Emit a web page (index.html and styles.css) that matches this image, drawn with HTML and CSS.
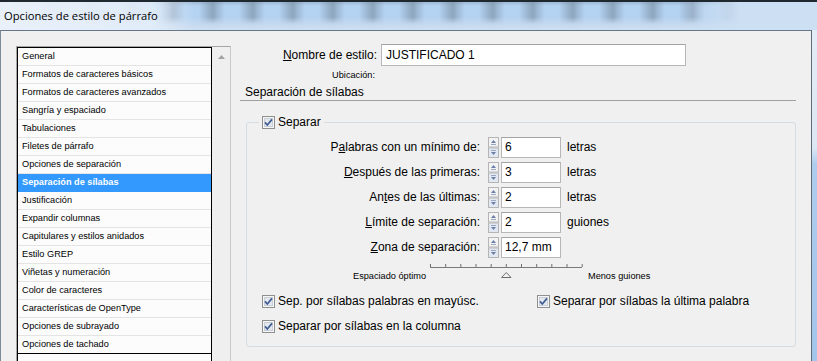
FILE: index.html
```html
<!DOCTYPE html>
<html lang="es">
<head>
<meta charset="utf-8">
<title>Opciones de estilo de párrafo</title>
<link rel="stylesheet" href="styles.css">
</head>
<body>
<div class="window">
  <header class="titlebar"><span class="title">Opciones de estilo de párrafo</span></header>
  <div class="frame">
    <div class="client">
      <nav class="sidebar">
        <ul class="list">
          <li>General</li>
          <li>Formatos de caracteres básicos</li>
          <li>Formatos de caracteres avanzados</li>
          <li>Sangría y espaciado</li>
          <li>Tabulaciones</li>
          <li>Filetes de párrafo</li>
          <li>Opciones de separación</li>
          <li class="sel">Separación de sílabas</li>
          <li>Justificación</li>
          <li>Expandir columnas</li>
          <li>Capitulares y estilos anidados</li>
          <li>Estilo GREP</li>
          <li>Viñetas y numeración</li>
          <li>Color de caracteres</li>
          <li>Características de OpenType</li>
          <li>Opciones de subrayado</li>
          <li class="last">Opciones de tachado</li>
        </ul>
        <div class="scroll"><svg width="7" height="4" viewBox="0 0 7 4"><path d="M0 4h7L3.5 0z" fill="#a3a3a3"/></svg></div>
      </nav>
      <main class="main">
        <div class="namegrid">
          <label class="lbl"><u>N</u>ombre de estilo:</label>
          <div class="field name">JUSTIFICADO 1</div>
          <span class="ubic">Ubicación:</span>
        </div>
        <div class="section">Separación de sílabas</div>
        <fieldset class="group">
          <legend class="legend">
            <svg class="cb" width="13" height="13" viewBox="0 0 13 13"><rect x="0.5" y="0.5" width="12" height="12" fill="#f6f6f6" stroke="#8e8f8f"/><rect x="2.5" y="2.5" width="8" height="8" fill="#e3e7ee" stroke="#c9ced6"/><path d="M3 6.4l2.3 2.6L10 3.4" fill="none" stroke="#3f5c93" stroke-width="1.7"/></svg>
            <span>Separar</span>
          </legend>
          <div class="spins">
            <span class="slbl">P<u>a</u>labras con un mínimo de:</span>
            <span class="spin"><svg width="11" height="21" viewBox="0 0 11 21"><rect x="0.5" y="0.5" width="10" height="9.5" fill="#f3f3f3" stroke="#b5b5b5"/><rect x="0.5" y="11" width="10" height="9.5" fill="#e2e8f2" stroke="#b5b5b5"/><path d="M3 6h5L5.5 3z" fill="#6a7fa8"/><path d="M3 7.5h5" stroke="#9aa8c2"/><path d="M3 15h5l-2.5 3z" fill="#6a7fa8"/><path d="M3 13.5h5" stroke="#9aa8c2"/></svg></span>
            <span class="field num">6</span>
            <span class="unit">letras</span>

            <span class="slbl"><u>D</u>espués de las primeras:</span>
            <span class="spin"><svg width="11" height="21" viewBox="0 0 11 21"><rect x="0.5" y="0.5" width="10" height="9.5" fill="#f3f3f3" stroke="#b5b5b5"/><rect x="0.5" y="11" width="10" height="9.5" fill="#e2e8f2" stroke="#b5b5b5"/><path d="M3 6h5L5.5 3z" fill="#6a7fa8"/><path d="M3 7.5h5" stroke="#9aa8c2"/><path d="M3 15h5l-2.5 3z" fill="#6a7fa8"/><path d="M3 13.5h5" stroke="#9aa8c2"/></svg></span>
            <span class="field num">3</span>
            <span class="unit">letras</span>

            <span class="slbl">An<u>t</u>es de las últimas:</span>
            <span class="spin"><svg width="11" height="21" viewBox="0 0 11 21"><rect x="0.5" y="0.5" width="10" height="9.5" fill="#f3f3f3" stroke="#b5b5b5"/><rect x="0.5" y="11" width="10" height="9.5" fill="#e2e8f2" stroke="#b5b5b5"/><path d="M3 6h5L5.5 3z" fill="#6a7fa8"/><path d="M3 7.5h5" stroke="#9aa8c2"/><path d="M3 15h5l-2.5 3z" fill="#6a7fa8"/><path d="M3 13.5h5" stroke="#9aa8c2"/></svg></span>
            <span class="field num">2</span>
            <span class="unit">letras</span>

            <span class="slbl"><u>L</u>ímite de separación:</span>
            <span class="spin"><svg width="11" height="21" viewBox="0 0 11 21"><rect x="0.5" y="0.5" width="10" height="9.5" fill="#f3f3f3" stroke="#b5b5b5"/><rect x="0.5" y="11" width="10" height="9.5" fill="#e2e8f2" stroke="#b5b5b5"/><path d="M3 6h5L5.5 3z" fill="#6a7fa8"/><path d="M3 7.5h5" stroke="#9aa8c2"/><path d="M3 15h5l-2.5 3z" fill="#6a7fa8"/><path d="M3 13.5h5" stroke="#9aa8c2"/></svg></span>
            <span class="field num">2</span>
            <span class="unit">guiones</span>

            <span class="slbl"><u>Z</u>ona de separación:</span>
            <span class="spin"><svg width="11" height="21" viewBox="0 0 11 21"><rect x="0.5" y="0.5" width="10" height="9.5" fill="#f3f3f3" stroke="#b5b5b5"/><rect x="0.5" y="11" width="10" height="9.5" fill="#e2e8f2" stroke="#b5b5b5"/><path d="M3 6h5L5.5 3z" fill="#6a7fa8"/><path d="M3 7.5h5" stroke="#9aa8c2"/><path d="M3 15h5l-2.5 3z" fill="#6a7fa8"/><path d="M3 13.5h5" stroke="#9aa8c2"/></svg></span>
            <span class="field num">12,7 mm</span>
          </div>
          <div class="slider">
            <span class="smallt first">Espaciado óptimo</span>
            <svg class="track" width="153" height="18" viewBox="0 0 153 18">
              <path d="M0 5.5h152" stroke="#7a7a7a"/>
              <path d="M0.5 2v3M15.7 2v3M30.8 2v3M46 2v3M61.2 2v3M76.3 2v3M91.5 2v3M106.7 2v3M121.8 2v3M137 2v3M152.2 2v3" stroke="#6e6e6e"/>
              <path d="M71.5 15.5h9.5L76.3 10.5z" fill="#f2f2f2" stroke="#6f6f6f"/>
            </svg>
            <span class="smallt last">Menos guiones</span>
          </div>
          <div class="checks">
            <label class="check"><svg class="cb" width="13" height="13" viewBox="0 0 13 13"><rect x="0.5" y="0.5" width="12" height="12" fill="#f6f6f6" stroke="#8e8f8f"/><rect x="2.5" y="2.5" width="8" height="8" fill="#e3e7ee" stroke="#c9ced6"/><path d="M3 6.4l2.3 2.6L10 3.4" fill="none" stroke="#3f5c93" stroke-width="1.7"/></svg><span>Sep. por sílabas palabras en mayúsc.</span></label>
            <label class="check"><svg class="cb" width="13" height="13" viewBox="0 0 13 13"><rect x="0.5" y="0.5" width="12" height="12" fill="#f6f6f6" stroke="#8e8f8f"/><rect x="2.5" y="2.5" width="8" height="8" fill="#e3e7ee" stroke="#c9ced6"/><path d="M3 6.4l2.3 2.6L10 3.4" fill="none" stroke="#3f5c93" stroke-width="1.7"/></svg><span>Separar por sílabas la última palabra</span></label>
            <label class="check"><svg class="cb" width="13" height="13" viewBox="0 0 13 13"><rect x="0.5" y="0.5" width="12" height="12" fill="#f6f6f6" stroke="#8e8f8f"/><rect x="2.5" y="2.5" width="8" height="8" fill="#e3e7ee" stroke="#c9ced6"/><path d="M3 6.4l2.3 2.6L10 3.4" fill="none" stroke="#3f5c93" stroke-width="1.7"/></svg><span>Separar por sílabas en la columna</span></label>
          </div>
        </fieldset>
      </main>
    </div>
    <div class="rborder"></div>
  </div>
</div>
</body>
</html>
```

FILE: styles.css
```css
* { box-sizing: border-box; }

html, body {
  margin: 0;
  padding: 0;
  background: #f0f0f0;
}

.window {
  width: 817px;
  height: 361px;
  overflow: hidden;
  font-family: "Liberation Sans", Arial, sans-serif;
  color: #000;
}

/* ---------- title bar (Aero glass) ---------- */
.titlebar {
  height: 30px;
  display: flex;
  align-items: center;
  padding-left: 4px;
  background-color: #bcd2e8;
  background-image:
    linear-gradient(180deg, #1f272f 0, #1f272f 2px, transparent 2px),
    linear-gradient(90deg, rgba(234,241,250,.97) 0, rgba(228,238,249,.9) 150px, rgba(220,233,247,0) 195px),
    linear-gradient(90deg, rgba(205,223,243,0) 680px, rgba(205,223,243,1) 740px),
    linear-gradient(180deg, rgba(120,140,160,.35) 2px, rgba(190,212,236,0) 6px, rgba(190,212,236,0) 17px, rgba(198,218,240,.92) 24px, rgba(206,223,241,1) 30px),
    repeating-linear-gradient(90deg, #8ea6be 0, #9fbad6 5px, #b4d2f1 12px, #b4d2f1 26px, #9fbad6 33px, #8ea6be 40px);
  background-position: 0 0, 0 0, 0 0, 0 0, 13px 0;
}

.title {
  font-family: "Open Sans", "Liberation Sans", sans-serif;
  font-size: 11.2px;
  color: #000;
  line-height: 16px;
  margin-top: 1px;
}

/* ---------- frame ---------- */
.frame {
  display: flex;
  height: 331px;
}

.client {
  width: 812px;
  flex: none;
  display: flex;
  align-items: flex-start;
  background: #f0f0f0;
  border-top: 1px solid #66778a;
  border-left: 1px solid #7c8a99;
  border-right: 1px solid #5e6b79;
  padding: 0 0 0 15px;
}

.rborder {
  flex: 1;
  background: linear-gradient(180deg, #e4ecf6 0, #dce7f3 118px, #aecced 134px, #a3c5ea 100%);
}

/* ---------- sidebar list ---------- */
.sidebar {
  width: 215px;
  height: 330px;
  flex: none;
  display: flex;
  margin-top: 15px;
  border-top: 1px solid #a5a5a5;
  border-left: 1px solid #a5a5a5;
  border-right: 1px solid #cacaca;
}

.list {
  list-style: none;
  margin: 0;
  padding: 0;
  width: 195px;
  flex: none;
  background: #fcfcfc;
  border: 1px solid #000;
  border-bottom: none;
  font-size: 9.2px;
}

.list li {
  height: 18px;
  line-height: 17px;
  padding-left: 4px;
  border-bottom: 1px solid #e4e4e4;
  white-space: nowrap;
}

.list li.sel {
  background: #3399ff;
  color: #fff;
  font-weight: bold;
  border-bottom-color: #3399ff;
}

.list li.last {
  border-bottom-color: #000;
}

.scroll {
  flex: 1;
  display: flex;
  justify-content: center;
  align-items: flex-start;
  padding-top: 8px;
  padding-left: 1px;
  background: #efefef;
}

.scroll svg { display: block; }

/* ---------- main area ---------- */
.main {
  width: 556px;
  flex: none;
  margin-left: 9px;
  padding-top: 13px;
  font-size: 12px;
}

.namegrid {
  display: grid;
  grid-template-columns: 137px 305px;
  column-gap: 4px;
}

.lbl {
  line-height: 22px;
  text-align: right;
}

.field {
  display: block;
  height: 22px;
  background: #fff;
  border: 1px solid #b7b7b7;
  border-top-color: #a3a3a3;
  line-height: 20px;
  padding-left: 4px;
  white-space: nowrap;
}

.ubic {
  font-size: 9.2px;
  line-height: 12px;
  padding: 3px 2px 2px 0;
  text-align: right;
}

.section {
  padding: 1px 0 0 5px;
  line-height: 16px;
  border-bottom: 1px solid #a0a0a0;
}

/* ---------- group box ---------- */
.group {
  width: 550px;
  margin: 13px 0 0 6px;
  padding: 0 0 12px 0;
  border: 1px solid #d5dde3;
  border-radius: 3px;
  min-width: 0;
}

.legend {
  display: flex;
  align-items: center;
  gap: 3px;
  margin-left: 12px;
  padding: 0 3px;
  line-height: 16px;
}

.cb { display: block; flex: none; }

.spins {
  display: grid;
  grid-template-columns: 233px 19px 62px auto;
  grid-auto-rows: 21px;
  row-gap: 4px;
  margin-top: 7px;
  align-items: center;
}

.slbl {
  text-align: right;
  line-height: 21px;
}

.spin {
  margin-left: 8px;
  height: 21px;
}

.spin svg { display: block; }

.field.num {
  width: 60px;
  height: 21px;
  margin-left: 2px;
  line-height: 19px;
  padding-left: 3px;
}

.unit {
  margin-left: 6px;
  line-height: 21px;
}

/* ---------- slider ---------- */
.slider {
  display: flex;
  align-items: flex-start;
  margin: 4px 0 0 106px;
}

.smallt {
  font-size: 9.2px;
  line-height: 12px;
  padding-top: 8px;
  white-space: nowrap;
}

.smallt.first { width: 77px; }
.smallt.last { margin-left: 5px; }

.track { display: block; flex: none; }

/* ---------- checkboxes ---------- */
.checks {
  display: grid;
  grid-template-columns: 275px auto;
  row-gap: 9px;
  margin: 11px 0 0 15px;
}

.check {
  display: flex;
  align-items: center;
  gap: 3px;
  line-height: 16px;
  white-space: nowrap;
}
```
